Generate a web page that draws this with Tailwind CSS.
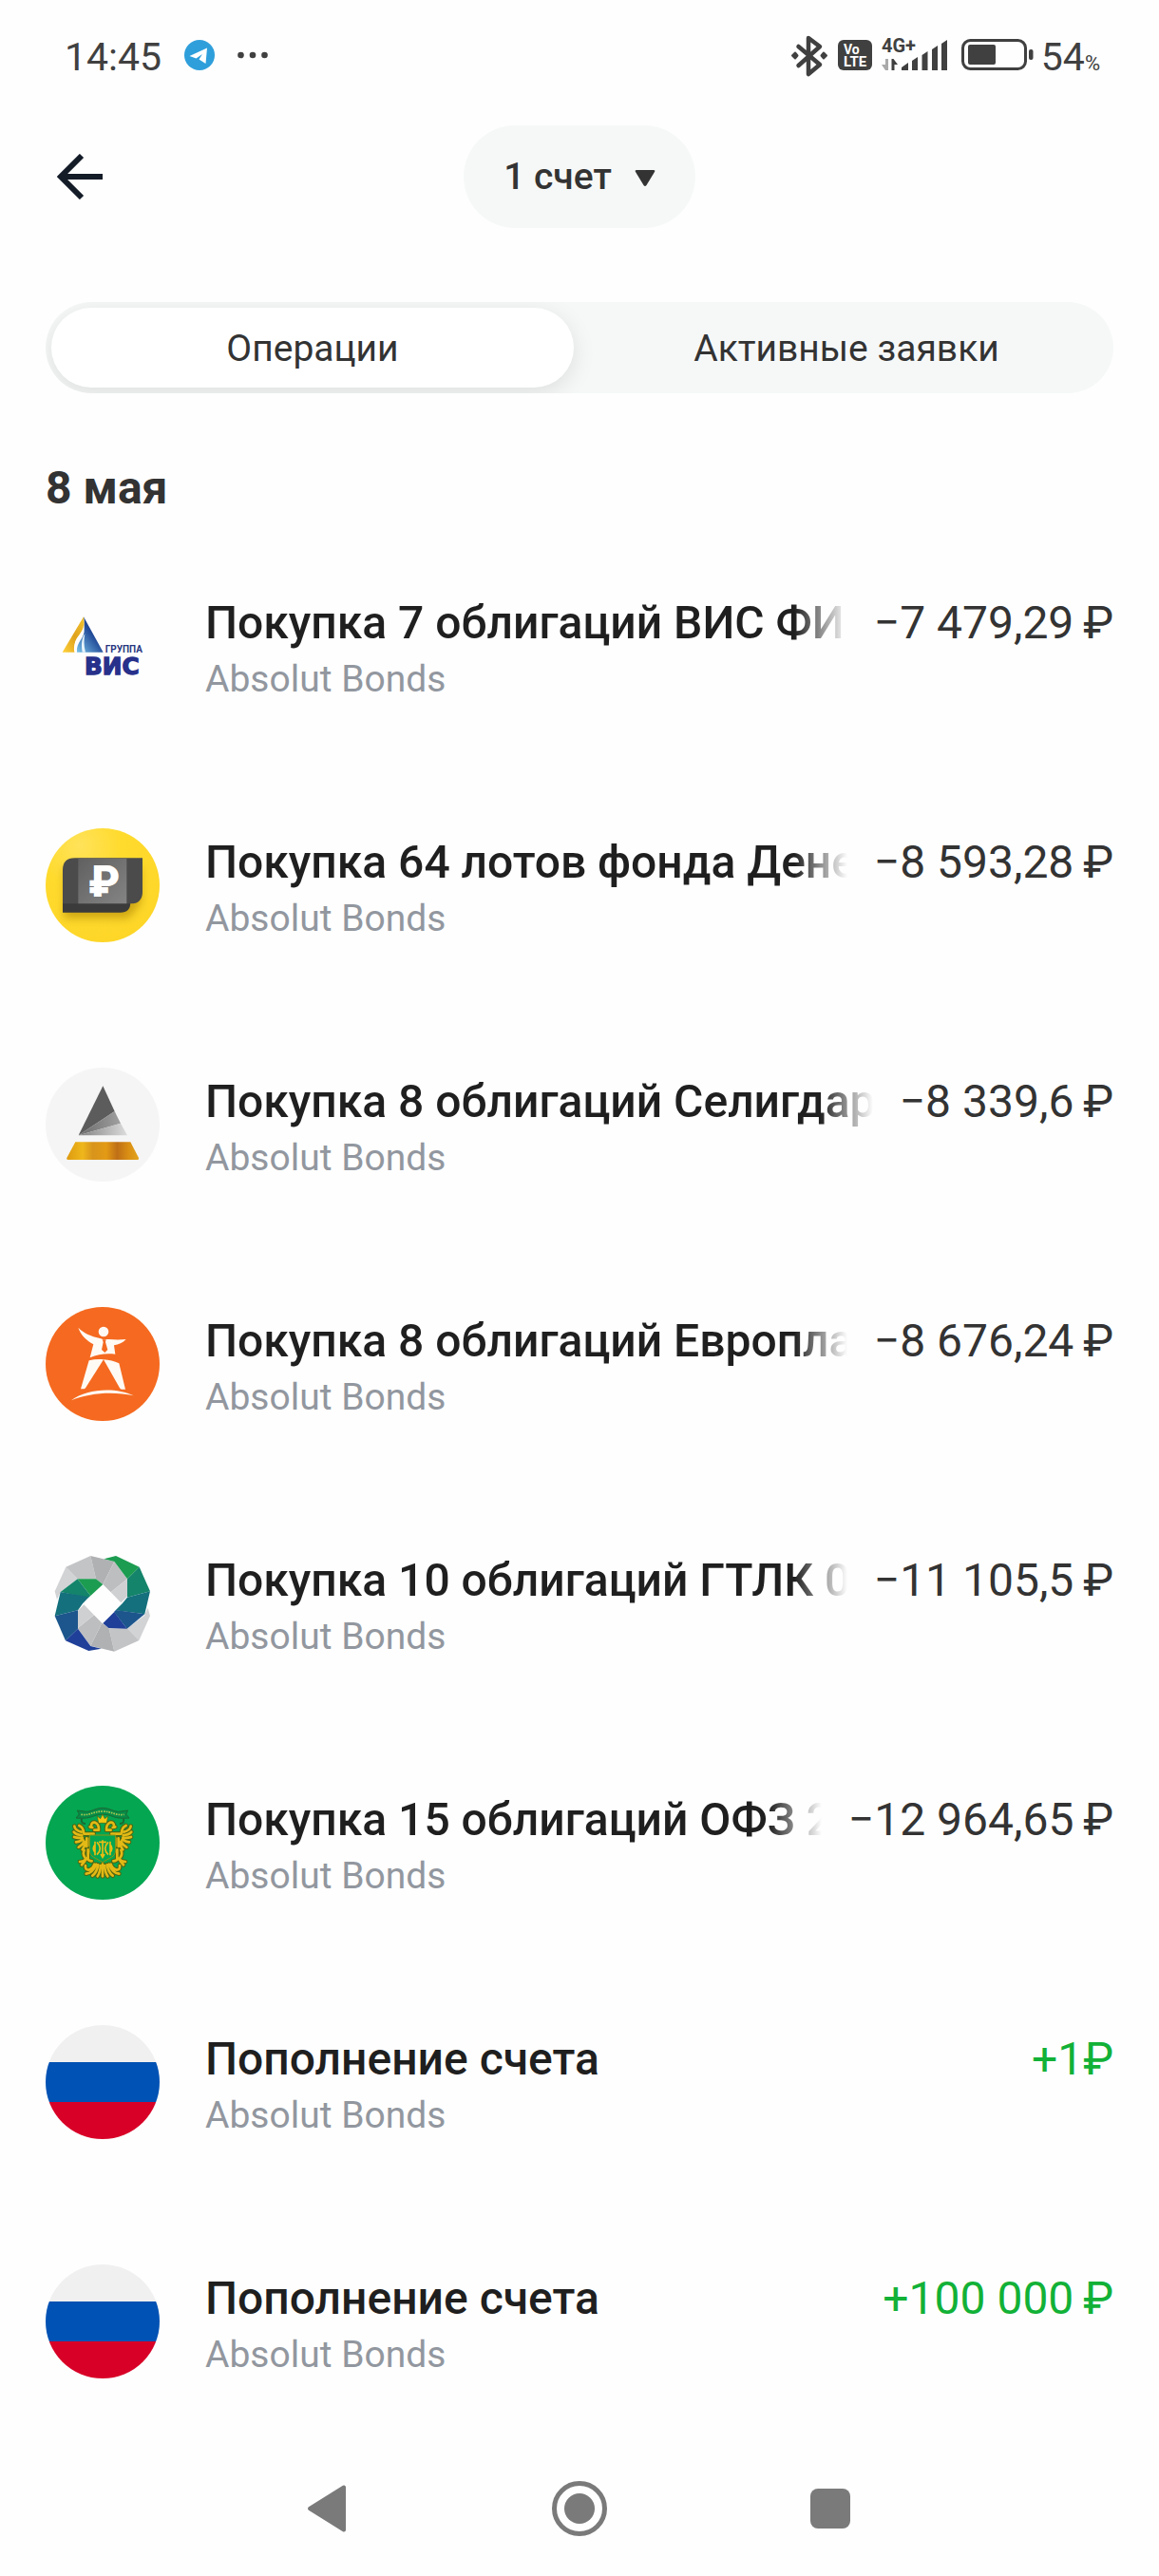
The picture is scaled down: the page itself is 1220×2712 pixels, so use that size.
<!doctype html>
<html lang="ru">
  <head>
    <meta charset="UTF-8" />
    <meta name="viewport" content="width=device-width, initial-scale=1.0" />
    <title>Операции</title>
    <script src="https://cdn.jsdelivr.net/npm/@tailwindcss/browser@4"></script>
  </head>
  <body class="bg-[#fefefe] text-[#333] font-[Roboto,'Noto_Sans',sans-serif]">
    <div class="min-h-screen flex flex-col">
      <!-- Status bar -->
      <div class="flex items-center justify-between pt-9 pl-[68px] pr-[62px] text-[#404040]">
        <div class="flex items-center gap-6">
          <span class="text-[41px] leading-12">14:45</span>
          <svg class="w-8 h-9" viewBox="0 0 32 36">
            <circle cx="16" cy="16" r="16" fill="#2f9fdb"/>
            <path d="M5.500 17 24 8.500 22.500 25 15.500 20.500 19 15 12.500 19.500z" fill="#fff"/>
          </svg>
          <svg class="w-8 h-9" viewBox="0 0 32 36" fill="currentColor">
            <circle cx="3.500" cy="16" r="3.300"/><circle cx="16" cy="16" r="3.300"/><circle cx="28.500" cy="16" r="3.300"/>
          </svg>
        </div>
        <div class="flex items-center">
          <svg class="w-10 h-12" viewBox="0 0 40 48" fill="none" stroke="currentColor" stroke-width="4.500" stroke-linejoin="round" stroke-linecap="round">
            <path d="M8.500 13 31 32 19 42V4L31 13 8.500 33"/>
            <path d="M5 19.500 7.500 22.500 5 25.500 2 22.500zM35 19.500 38 22.500 35 25.500 32.500 22.500z" fill="currentColor" stroke-width="2"/>
          </svg>
          <svg class="w-9 h-12 ml-[10px]" viewBox="0 0 36 48">
            <rect y="6" width="36" height="32" rx="6" fill="currentColor"/>
            <text x="6" y="20.500" font-size="14" font-weight="700" fill="#fff">Vo</text>
            <text x="6" y="34" font-size="15" font-weight="700" fill="#fff">LTE</text>
          </svg>
          <svg class="w-[70px] h-12 ml-[10px]" viewBox="0 0 70 48" fill="currentColor">
            <text x="0" y="19" font-size="20" font-weight="700">4G+</text>
            <path d="M4 26h3v12H4L0 32h4z" fill="#aaa"/>
            <path d="M10.500 26h2l4.500 6h-3.500v6h-3z"/>
            <path d="M21 35l7-5v8h-7zM32 28l6-4v14h-6zM42.500 22l6-4v20h-6zM53 16l6-4v26h-6zM63 10l6-4v32h-6z"/>
          </svg>
          <svg class="w-[76px] h-12 ml-[14px]" viewBox="0 0 76 48" fill="none">
            <rect x="1.500" y="6.500" width="66" height="30" rx="8" stroke="currentColor" stroke-width="3"/>
            <rect x="7" y="11" width="29" height="21" rx="2" fill="currentColor"/>
            <rect x="71" y="16" width="4.500" height="11" rx="2" fill="currentColor"/>
          </svg>
          <div class="flex items-baseline ml-2">
            <span class="text-[41px] leading-12">54</span>
            <span class="text-[22px]">%</span>
          </div>
        </div>
      </div>

      <header class="grid grid-cols-[1fr_auto_1fr] items-center px-12 pt-12">
        <a href="#" aria-label="Назад" class="justify-self-start ml-3 text-[#141c28]">
          <svg class="size-12" viewBox="0 0 48 48" fill="none" stroke="currentColor" stroke-width="6">
            <path d="M48 24H5M26 2 4 24l22 22"/>
          </svg>
        </a>
        <div class="relative">
          <select aria-label="Счет" class="appearance-none h-[108px] pl-[42px] pr-[88px] rounded-full bg-[#f6f8f8] text-[39px] font-medium field-sizing-content">
            <option>1 счет</option>
          </select>
          <svg class="absolute right-[42px] top-[46px] w-[22px] h-5 pointer-events-none" viewBox="0 0 22 20" fill="currentColor">
            <path d="M2 1h18q2 0 1 2l-8.500 14q-1.500 2-3 0L1 3Q0 1 2 1z"/>
          </svg>
        </div>
      </header>

      <main class="px-12">
        <div role="tablist" class="mt-[78px] grid grid-cols-2 gap-3 h-24 p-[6px] rounded-full bg-[#f6f8f8] overflow-hidden text-[39px]">
          <button role="tab" aria-selected="true" class="pt-0.5 rounded-full bg-white shadow-[0_6px_24px_rgba(0,0,0,0.1)]">Операции</button>
          <button role="tab" aria-selected="false" class="pt-0.5 rounded-full">Активные заявки</button>
        </div>

        <h2 class="mt-[72px] text-[48px] leading-14 font-bold">8 мая</h2>

        <ul class="mt-[78px] space-y-[132px]">
          <li class="flex items-start gap-12">
            <svg class="size-[120px] shrink-0" viewBox="54 0 360 360">
              <defs>
                <linearGradient id="visGold" x1="0" y1="1" x2="1" y2="0"><stop stop-color="#ffd23a"/><stop offset=".5" stop-color="#e0a21c"/><stop offset="1" stop-color="#f2c530"/></linearGradient>
                <linearGradient id="visBlue" x1="1" y1="0" x2="0" y2="1"><stop stop-color="#1d2f80"/><stop offset=".45" stop-color="#214a98"/><stop offset="1" stop-color="#7cc6ec"/></linearGradient>
              </defs>
              <path d="M174 88 107 200h40c-3-24-2-40 16-56 12-12 16-30 11-56z" fill="url(#visGold)"/>
              <path d="M174 88c8 34-4 52-14 64-10 14-12 30-8 48h84z" fill="url(#visBlue)"/>
              <path d="M174 110c2 30-36 44-29 90h8c-4-32 26-44 23-74z" fill="#fff"/>
              <path d="M178 142c-10 14-12 34-8 58h10c-6-22-5-40-2-58z" fill="#e8f4fb"/>
              <text x="242" y="200" font-size="30" font-weight="700" fill="#27357f">ГРУППА</text>
              <text x="177" y="270" font-size="74" font-weight="700" font-family="DejaVu Sans" fill="#27308a" stroke="#27308a" stroke-width="4">ВИС</text>
            </svg>
            <div class="min-w-0 flex-1 pt-2">
              <div class="flex gap-[28px] text-[48px] leading-14">
                <h3 class="min-w-0 flex-1 overflow-hidden whitespace-nowrap font-medium text-[#1f1f1f] [mask-image:linear-gradient(to_left,transparent,black_56px)]">Покупка 7 облигаций ВИС ФИНАНС</h3>
                <span class="whitespace-nowrap">−7 479,29&thinsp;₽</span>
              </div>
              <p class="mt-[7px] text-[39px] leading-12 text-[#92979f]">Absolut Bonds</p>
            </div>
          </li>

          <li class="flex items-start gap-12">
            <svg class="size-[120px] shrink-0" viewBox="54 756 360 360">
              <defs>
                <radialGradient id="coin" cx=".3" cy=".15" r=".9"><stop stop-color="#ffe25a"/><stop offset=".4" stop-color="#ffdb2e"/><stop offset="1" stop-color="#fdd628"/></radialGradient>
                <linearGradient id="bill" x1="0" y1="0" x2="1" y2="1"><stop stop-color="#606060"/><stop offset="1" stop-color="#848484"/></linearGradient>
                <filter id="soft" x="-20%" y="-20%" width="140%" height="150%"><feGaussianBlur stdDeviation="12"/></filter>
              </defs>
              <circle cx="234" cy="936" r="180" fill="url(#coin)"/>
              <path d="M112 880h244v110l-40 50H112z" fill="#a07800" opacity=".5" filter="url(#soft)"/>
              <path d="M108 960h214v30q0 32-32 32H108z" fill="#3b3b3b"/>
              <path d="M146 850h214v106q0 38-38 38H108V888q0-38 38-38z" fill="#4b4b4b"/>
              <path d="M157 851h153v143H157z" fill="url(#bill)"/>
              <text x="189" y="973" font-size="138" font-weight="900" fill="#fff">₽</text>
            </svg>
            <div class="min-w-0 flex-1 pt-2">
              <div class="flex gap-[28px] text-[48px] leading-14">
                <h3 class="min-w-0 flex-1 overflow-hidden whitespace-nowrap font-medium text-[#1f1f1f] [mask-image:linear-gradient(to_left,transparent,black_56px)]">Покупка 64 лотов фонда Денежный</h3>
                <span class="whitespace-nowrap">−8 593,28&thinsp;₽</span>
              </div>
              <p class="mt-[7px] text-[39px] leading-12 text-[#92979f]">Absolut Bonds</p>
            </div>
          </li>

          <li class="flex items-start gap-12">
            <svg class="size-[120px] shrink-0" viewBox="54 42 360 360">
              <defs>
                <linearGradient id="gold"><stop stop-color="#dd9a10"/><stop offset=".22" stop-color="#efb71c"/><stop offset=".36" stop-color="#d8941c"/><stop offset=".55" stop-color="#e39a14"/><stop offset=".7" stop-color="#bf6f16"/><stop offset=".85" stop-color="#d98e14"/><stop offset="1" stop-color="#e2a41c"/></linearGradient>
                <linearGradient id="steel"><stop stop-color="#6a6a6a"/><stop offset="1" stop-color="#a0a0a0"/></linearGradient>
                <linearGradient id="silver"><stop stop-color="#808080"/><stop offset="1" stop-color="#dcdcdc"/></linearGradient>
              </defs>
              <circle cx="234" cy="222" r="180" fill="#f5f5f5"/>
              <path d="M235 100 158 256l114-76z" fill="#5c5c5c"/>
              <path d="m158 256 114-76 19 38z" fill="url(#steel)"/>
              <path d="m158 256 133-38 21 38z" fill="url(#silver)"/>
              <path d="M148 277h174l26 50q2 6-4 6H125q-6 0-4-6z" fill="url(#gold)"/>
            </svg>
            <div class="min-w-0 flex-1 pt-2">
              <div class="flex gap-[28px] text-[48px] leading-14">
                <h3 class="min-w-0 flex-1 overflow-hidden whitespace-nowrap font-medium text-[#1f1f1f] [mask-image:linear-gradient(to_left,transparent,black_56px)]">Покупка 8 облигаций Селигдар</h3>
                <span class="whitespace-nowrap">−8 339,6&thinsp;₽</span>
              </div>
              <p class="mt-[7px] text-[39px] leading-12 text-[#92979f]">Absolut Bonds</p>
            </div>
          </li>

          <li class="flex items-start gap-12">
            <svg class="size-[120px] shrink-0" viewBox="54 48 360 360">
              <circle cx="234" cy="228" r="180" fill="#f56a20"/>
              <g fill="#fffaf4">
                <circle cx="237" cy="126" r="16"/>
                <path d="M157 113c18 18 42 28 66 33 8 2 12 4 15 5 5-1 10-1 16-1 20 2 36 2 54 0-10 11-24 17-38 19l4 28c-28-4-54 0-80 11l11-42c-22-12-40-30-48-53z"/>
                <path d="M191 217c16-4 32-5 46-3l-57 90q-2 3-6 3h-9z"/>
                <path d="M237 214c18 1 34 5 49 12l20 82h-12q-4 0-6-4z"/>
                <path d="M135 343c50-38 140-42 197-15-60-14-140-10-197 15z"/>
              </g>
              <path d="M233 151h12l-2 8 7 24-9 9-10-9 5-24z" fill="#f56a20"/>
            </svg>
            <div class="min-w-0 flex-1 pt-2">
              <div class="flex gap-[28px] text-[48px] leading-14">
                <h3 class="min-w-0 flex-1 overflow-hidden whitespace-nowrap font-medium text-[#1f1f1f] [mask-image:linear-gradient(to_left,transparent,black_56px)]">Покупка 8 облигаций Европлан</h3>
                <span class="whitespace-nowrap">−8 676,24&thinsp;₽</span>
              </div>
              <p class="mt-[7px] text-[39px] leading-12 text-[#92979f]">Absolut Bonds</p>
            </div>
          </li>

          <li class="flex items-start gap-12">
            <svg class="size-[120px] shrink-0" viewBox="54 54 360 360">
              <!-- grey ribbon, drawn once and turned for the opposite side -->
              <g id="ribbon">
                <path d="M83 196 118 119 155 157 101 198 90 222z" fill="#d2d3d5"/>
                <path d="M118 119 196 84 213 157 155 157z" fill="#c3c4c6"/>
                <path d="M196 84 271 102 235 174 213 157z" fill="#b0b1b3"/>
                <path d="M271 102 312 157 260 199 235 174z" fill="#bdbec0"/>
                <path d="M312 157V212L292 232 260 199z" fill="#cfd0d2"/>
              </g>
              <use href="#ribbon" transform="rotate(180 233.500 235)"/>
              <!-- green to blue, right -->
              <path d="M238 94 276 84 350 119 312 157 271 102z" fill="#1c9c50"/>
              <path d="M350 119 384 196 312 215V157z" fill="#14846a"/>
              <path d="M384 196 367 268 275 256 296 235 312 215z" fill="#14707c"/>
              <path d="M367 268 311 314 270 261 276 255z" fill="#1c568c"/>
              <path d="M311 314 253 312 235 297 271 261z" fill="#1f3f98"/>
              <!-- green to blue, left -->
              <path d="M155 157 213 157 235 174 196 210z" fill="#1c9c50"/>
              <path d="M101 198 155 157 196 210 188 217z" fill="#14846a"/>
              <path d="M83 274 101 198 191 214 171 235 156 256z" fill="#14707c"/>
              <path d="M117 352 83 274 156 256V314z" fill="#1c568c"/>
              <path d="M230 377 190 384 117 352 156 314 196 369z" fill="#1f3f98"/>
            </svg>
            <div class="min-w-0 flex-1 pt-2">
              <div class="flex gap-[28px] text-[48px] leading-14">
                <h3 class="min-w-0 flex-1 overflow-hidden whitespace-nowrap font-medium text-[#1f1f1f] [mask-image:linear-gradient(to_left,transparent,black_56px)]">Покупка 10 облигаций ГТЛК 002P</h3>
                <span class="whitespace-nowrap">−11 105,5&thinsp;₽</span>
              </div>
              <p class="mt-[7px] text-[39px] leading-12 text-[#92979f]">Absolut Bonds</p>
            </div>
          </li>

          <li class="flex items-start gap-12">
            <svg class="size-[120px] shrink-0" viewBox="54 60 360 360">
              <defs>
                <!-- feathers of one wing, a leg and half of the tail -->
                <g id="feathers" fill="none" stroke-linecap="round">
                  <path d="M145 188q2 14 22 18M143 206q8 10 26 10M144 222q10 4 26 2M150 238q10 0 22-8M158 254q10-4 18-18M170 262q8-10 10-22"/>
                  <path d="M160 186q14 6 14 24M176 212h30M184 226v26M194 226v24"/>
                  <path d="M176 264q-6 12 2 22M188 262v28M162 300q14 0 22-10M168 310l10-12M200 298q-10 0-14-8"/>
                  <path d="M180 312q-2 14 10 14 14-4 18-18M182 338q20-2 32-30M202 344q14-10 18-34M218 346q8-12 10-34"/>
                  <path d="M198 188q0-14 12-12 12 4 12 22M194 190l8 2M208 200h14"/>
                </g>
                <path id="banner" d="M234 130c-22 0-34 12-50 12l-30-4 6 12-10 12c20 2 40 0 50-4 12-5 22-7 34-7"/>
              </defs>
              <circle cx="234" cy="240" r="180" fill="#04a651"/>
              <g fill="#078c48" stroke="#1a6a34" stroke-width="3">
                <use href="#banner"/>
                <use href="#banner" transform="matrix(-1 0 0 1 468 0)"/>
                <path d="M168 164q-4 16 12 16M300 164q4 16-12 16" fill="none" stroke-width="6"/>
              </g>
              <path d="M166 151c28 4 38-10 68-10s40 14 68 10" fill="none" stroke="#a8c850" stroke-width="5" stroke-dasharray="5 3"/>
              <g stroke="#4d6412" stroke-width="14">
                <use href="#feathers"/>
                <use href="#feathers" transform="matrix(-1 0 0 1 468 0)"/>
                <path d="M234 308v38" stroke-linecap="round"/>
              </g>
              <g stroke="#e3b915" stroke-width="8">
                <use href="#feathers"/>
                <use href="#feathers" transform="matrix(-1 0 0 1 468 0)"/>
                <path d="M234 308v38" stroke-linecap="round"/>
              </g>
              <path d="m221 178-4-22 10 8 7-14 7 14 10-8-4 22z" fill="#f2c814" stroke="#4d6412" stroke-width="2"/>
              <path d="M193 216h82v48c0 22-22 24-41 38-19-14-41-16-41-38z" fill="#04a651" stroke="#8f9412" stroke-width="3"/>
              <g fill="none" stroke="#e9bd14" stroke-width="5">
                <path d="M234 232v54M222 238h24M228 276l6 10 6-10"/>
                <path d="M210 236v44M258 236v44M216 238c14 14 14 26 0 40M252 238c-14 14-14 26 0 40M212 244c-10 8-10 20 0 28M256 244c10 8 10 20 0 28"/>
              </g>
            </svg>
            <div class="min-w-0 flex-1 pt-2">
              <div class="flex gap-[28px] text-[48px] leading-14">
                <h3 class="min-w-0 flex-1 overflow-hidden whitespace-nowrap font-medium text-[#1f1f1f] [mask-image:linear-gradient(to_left,transparent,black_56px)]">Покупка 15 облигаций ОФЗ 26238</h3>
                <span class="whitespace-nowrap">−12 964,65&thinsp;₽</span>
              </div>
              <p class="mt-[7px] text-[39px] leading-12 text-[#92979f]">Absolut Bonds</p>
            </div>
          </li>

          <li class="flex items-start gap-12">
            <div class="size-[120px] shrink-0 rounded-full overflow-hidden flex flex-col">
              <div class="h-[39px] bg-[#f0f0f0]"></div>
              <div class="h-[42px] bg-[#0052b4]"></div>
              <div class="h-[39px] bg-[#d80027]"></div>
            </div>
            <div class="min-w-0 flex-1 pt-2">
              <div class="flex gap-[28px] text-[48px] leading-14">
                <h3 class="min-w-0 flex-1 whitespace-nowrap font-medium text-[#1f1f1f]">Пополнение счета</h3>
                <span class="whitespace-nowrap text-[#12b137]">+1₽</span>
              </div>
              <p class="mt-[7px] text-[39px] leading-12 text-[#92979f]">Absolut Bonds</p>
            </div>
          </li>

          <li class="flex items-start gap-12">
            <div class="size-[120px] shrink-0 rounded-full overflow-hidden flex flex-col">
              <div class="h-[39px] bg-[#f0f0f0]"></div>
              <div class="h-[42px] bg-[#0052b4]"></div>
              <div class="h-[39px] bg-[#d80027]"></div>
            </div>
            <div class="min-w-0 flex-1 pt-2">
              <div class="flex gap-[28px] text-[48px] leading-14">
                <h3 class="min-w-0 flex-1 whitespace-nowrap font-medium text-[#1f1f1f]">Пополнение счета</h3>
                <span class="whitespace-nowrap text-[#12b137]">+100 000&thinsp;₽</span>
              </div>
              <p class="mt-[7px] text-[39px] leading-12 text-[#92979f]">Absolut Bonds</p>
            </div>
          </li>
        </ul>
      </main>

      <!-- System navigation -->
      <nav class="mt-auto flex justify-center h-[142px] text-[#7a7a7a]">
        <button aria-label="Назад" class="w-66 flex items-center justify-center">
          <svg class="size-[60px]" viewBox="0 0 60 60" fill="currentColor" stroke="currentColor" stroke-width="4" stroke-linejoin="round">
            <path d="M46 7.500v45L10 30z"/>
          </svg>
        </button>
        <button aria-label="Домой" class="w-66 flex items-center justify-center">
          <svg class="size-[60px]" viewBox="0 0 60 60">
            <circle cx="30" cy="30" r="26.500" fill="none" stroke="currentColor" stroke-width="5"/>
            <circle cx="30" cy="30" r="16" fill="currentColor"/>
          </svg>
        </button>
        <button aria-label="Недавние" class="w-66 flex items-center justify-center">
          <svg class="size-[60px]" viewBox="0 0 60 60" fill="currentColor">
            <rect x="9" y="9" width="42" height="42" rx="8"/>
          </svg>
        </button>
      </nav>
    </div>
  </body>
</html>
